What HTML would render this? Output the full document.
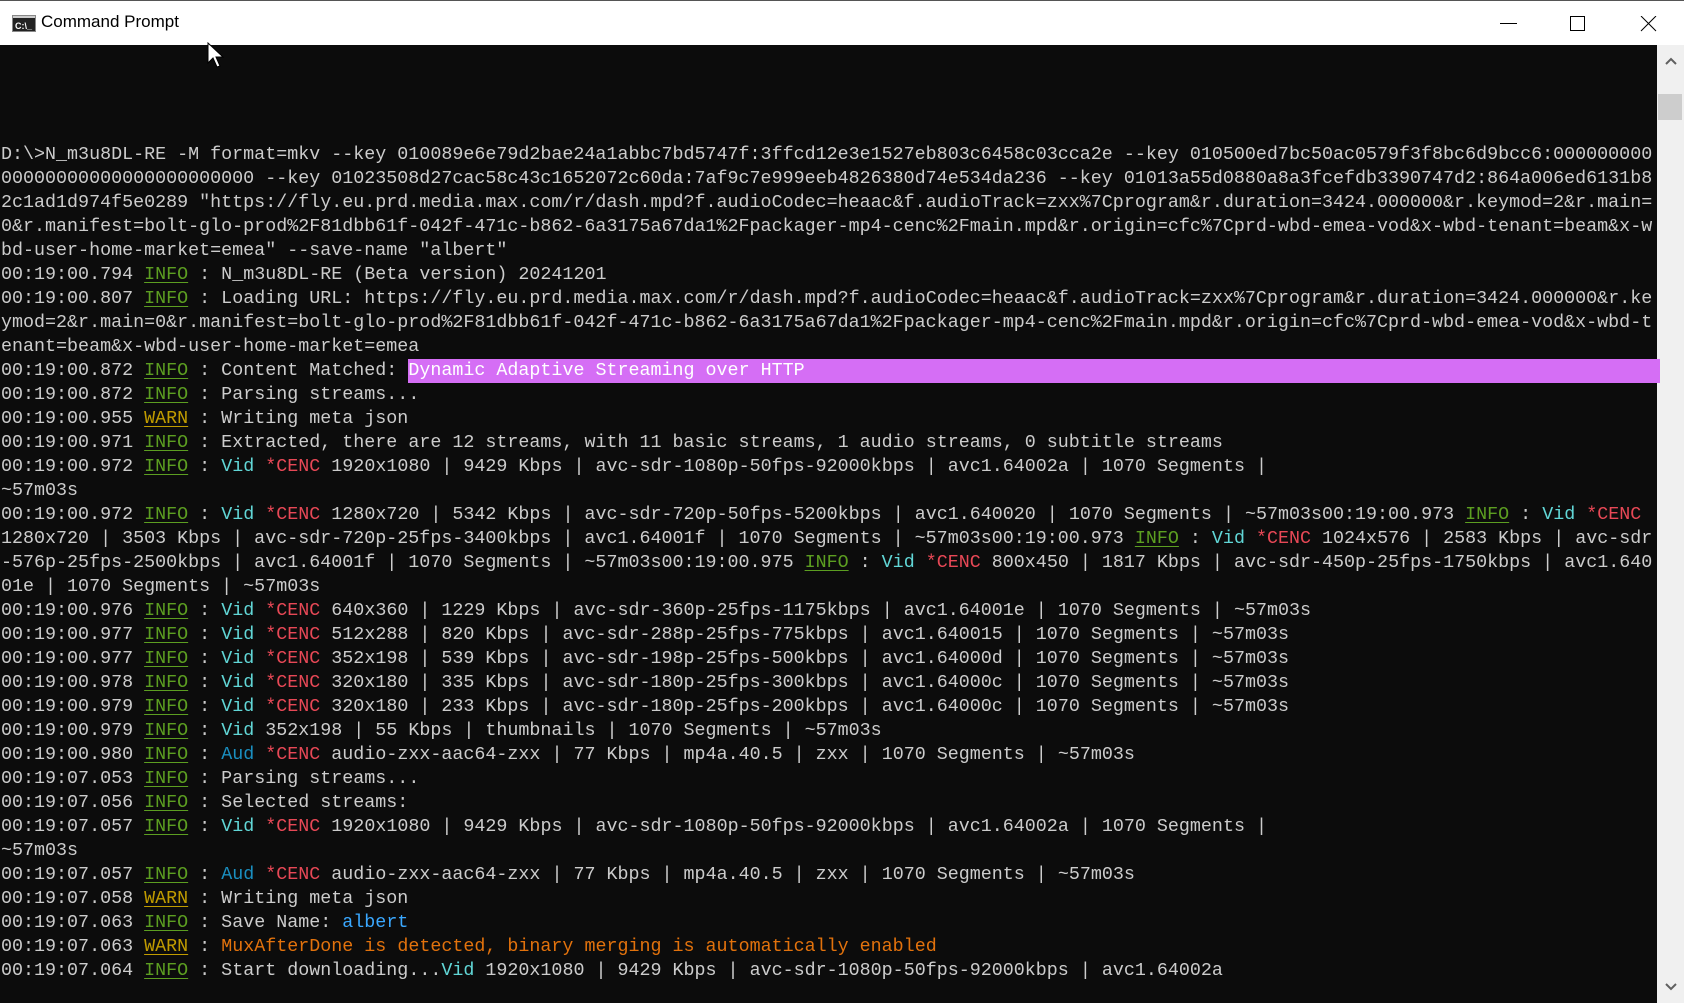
<!DOCTYPE html>
<html><head><meta charset="utf-8"><style>
html,body{margin:0;padding:0;width:1684px;height:1003px;overflow:hidden;background:#0c0c0c}
#title{position:absolute;left:0;top:0;width:1684px;height:45px;background:#fff;border-top:1px solid #555;box-sizing:border-box}
#title .t{position:absolute;left:41px;top:11px;font:17px "Liberation Sans",sans-serif;color:#000}
#scroll{position:absolute;left:1657px;top:45px;width:27px;height:958px;background:#f0f0f0}
#thumb{position:absolute;left:1658px;top:94px;width:24px;height:26px;background:#cdcdcd}
#con{position:absolute;left:1px;top:143px;font-family:"Liberation Mono",monospace;font-size:18.35px;line-height:24px;color:#cccccc;white-space:normal}
#con div{height:24px;white-space:pre}
.i{color:#5c9e21;text-decoration:underline;text-underline-offset:3px}
.w{color:#c19c00;text-decoration:underline;text-underline-offset:3px}
.v{color:#61d6d6}.a{color:#1a8fc0}.c{color:#e74856}.b{color:#3aa8ff}.o{color:#e2720c}
.h{background:#d56ef5;color:#fff;display:inline-block;width:1252px}
</style></head><body>
<div id="title">
<svg style="position:absolute;left:12px;top:14px" width="24" height="17" viewBox="0 0 24 17"><rect x="0.5" y="0.5" width="23" height="16" fill="#222" stroke="#888"/><rect x="1" y="1" width="22" height="2" fill="#ccc"/><text x="3" y="14" font-family="Liberation Sans" font-size="9" font-weight="bold" fill="#fff">C:\_</text></svg>
<div class="t">Command Prompt</div>
<svg style="position:absolute;left:1500px;top:15px" width="160" height="16"><line x1="0" y1="7.5" x2="17" y2="7.5" stroke="#000"/><rect x="70.5" y="0.5" width="14" height="14" fill="none" stroke="#000"/><path d="M141 0L156 15M156 0L141 15" stroke="#000"/></svg>
</div>
<svg style="position:absolute;left:207px;top:42px" width="20" height="28" viewBox="0 0 20 28"><path d="M1 1L1 21L6 16L10 25L13 24L9 15L16 15Z" fill="#fff" stroke="#000"/></svg>
<div id="scroll"><svg style="position:absolute;left:8px;top:12px" width="12" height="8"><path d="M1 7L6 2L11 7" stroke="#606060" stroke-width="2" fill="none"/></svg><svg style="position:absolute;left:8px;top:938px" width="12" height="8"><path d="M1 1L6 6L11 1" stroke="#606060" stroke-width="2" fill="none"/></svg></div>
<div id="thumb"></div>
<div id="con">
<div>D:\&gt;N_m3u8DL-RE -M format=mkv --key 010089e6e79d2bae24a1abbc7bd5747f:3ffcd12e3e1527eb803c6458c03cca2e --key 010500ed7bc50ac0579f3f8bc6d9bcc6:000000000</div>
<div>00000000000000000000000 --key 01023508d27cac58c43c1652072c60da:7af9c7e999eeb4826380d74e534da236 --key 01013a55d0880a8a3fcefdb3390747d2:864a006ed6131b8</div>
<div>2c1ad1d974f5e0289 "https://fly.eu.prd.media.max.com/r/dash.mpd?f.audioCodec=heaac&amp;f.audioTrack=zxx%7Cprogram&amp;r.duration=3424.000000&amp;r.keymod=2&amp;r.main=</div>
<div>0&amp;r.manifest=bolt-glo-prod%2F81dbb61f-042f-471c-b862-6a3175a67da1%2Fpackager-mp4-cenc%2Fmain.mpd&amp;r.origin=cfc%7Cprd-wbd-emea-vod&amp;x-wbd-tenant=beam&amp;x-w</div>
<div>bd-user-home-market=emea" --save-name "albert"</div>
<div>00:19:00.794 <span class="i">INFO</span> : N_m3u8DL-RE (Beta version) 20241201</div>
<div>00:19:00.807 <span class="i">INFO</span> : Loading URL: https://fly.eu.prd.media.max.com/r/dash.mpd?f.audioCodec=heaac&amp;f.audioTrack=zxx%7Cprogram&amp;r.duration=3424.000000&amp;r.ke</div>
<div>ymod=2&amp;r.main=0&amp;r.manifest=bolt-glo-prod%2F81dbb61f-042f-471c-b862-6a3175a67da1%2Fpackager-mp4-cenc%2Fmain.mpd&amp;r.origin=cfc%7Cprd-wbd-emea-vod&amp;x-wbd-t</div>
<div>enant=beam&amp;x-wbd-user-home-market=emea</div>
<div>00:19:00.872 <span class="i">INFO</span> : Content Matched: <span class="h">Dynamic Adaptive Streaming over HTTP</span></div>
<div>00:19:00.872 <span class="i">INFO</span> : Parsing streams...</div>
<div>00:19:00.955 <span class="w">WARN</span> : Writing meta json</div>
<div>00:19:00.971 <span class="i">INFO</span> : Extracted, there are 12 streams, with 11 basic streams, 1 audio streams, 0 subtitle streams</div>
<div>00:19:00.972 <span class="i">INFO</span> : <span class="v">Vid</span> <span class="c">*CENC</span> 1920x1080 | 9429 Kbps | avc-sdr-1080p-50fps-92000kbps | avc1.64002a | 1070 Segments |</div>
<div>~57m03s</div>
<div>00:19:00.972 <span class="i">INFO</span> : <span class="v">Vid</span> <span class="c">*CENC</span> 1280x720 | 5342 Kbps | avc-sdr-720p-50fps-5200kbps | avc1.640020 | 1070 Segments | ~57m03s00:19:00.973 <span class="i">INFO</span> : <span class="v">Vid</span> <span class="c">*CENC</span></div>
<div>1280x720 | 3503 Kbps | avc-sdr-720p-25fps-3400kbps | avc1.64001f | 1070 Segments | ~57m03s00:19:00.973 <span class="i">INFO</span> : <span class="v">Vid</span> <span class="c">*CENC</span> 1024x576 | 2583 Kbps | avc-sdr</div>
<div>-576p-25fps-2500kbps | avc1.64001f | 1070 Segments | ~57m03s00:19:00.975 <span class="i">INFO</span> : <span class="v">Vid</span> <span class="c">*CENC</span> 800x450 | 1817 Kbps | avc-sdr-450p-25fps-1750kbps | avc1.640</div>
<div>01e | 1070 Segments | ~57m03s</div>
<div>00:19:00.976 <span class="i">INFO</span> : <span class="v">Vid</span> <span class="c">*CENC</span> 640x360 | 1229 Kbps | avc-sdr-360p-25fps-1175kbps | avc1.64001e | 1070 Segments | ~57m03s</div>
<div>00:19:00.977 <span class="i">INFO</span> : <span class="v">Vid</span> <span class="c">*CENC</span> 512x288 | 820 Kbps | avc-sdr-288p-25fps-775kbps | avc1.640015 | 1070 Segments | ~57m03s</div>
<div>00:19:00.977 <span class="i">INFO</span> : <span class="v">Vid</span> <span class="c">*CENC</span> 352x198 | 539 Kbps | avc-sdr-198p-25fps-500kbps | avc1.64000d | 1070 Segments | ~57m03s</div>
<div>00:19:00.978 <span class="i">INFO</span> : <span class="v">Vid</span> <span class="c">*CENC</span> 320x180 | 335 Kbps | avc-sdr-180p-25fps-300kbps | avc1.64000c | 1070 Segments | ~57m03s</div>
<div>00:19:00.979 <span class="i">INFO</span> : <span class="v">Vid</span> <span class="c">*CENC</span> 320x180 | 233 Kbps | avc-sdr-180p-25fps-200kbps | avc1.64000c | 1070 Segments | ~57m03s</div>
<div>00:19:00.979 <span class="i">INFO</span> : <span class="v">Vid</span> 352x198 | 55 Kbps | thumbnails | 1070 Segments | ~57m03s</div>
<div>00:19:00.980 <span class="i">INFO</span> : <span class="a">Aud</span> <span class="c">*CENC</span> audio-zxx-aac64-zxx | 77 Kbps | mp4a.40.5 | zxx | 1070 Segments | ~57m03s</div>
<div>00:19:07.053 <span class="i">INFO</span> : Parsing streams...</div>
<div>00:19:07.056 <span class="i">INFO</span> : Selected streams:</div>
<div>00:19:07.057 <span class="i">INFO</span> : <span class="v">Vid</span> <span class="c">*CENC</span> 1920x1080 | 9429 Kbps | avc-sdr-1080p-50fps-92000kbps | avc1.64002a | 1070 Segments |</div>
<div>~57m03s</div>
<div>00:19:07.057 <span class="i">INFO</span> : <span class="a">Aud</span> <span class="c">*CENC</span> audio-zxx-aac64-zxx | 77 Kbps | mp4a.40.5 | zxx | 1070 Segments | ~57m03s</div>
<div>00:19:07.058 <span class="w">WARN</span> : Writing meta json</div>
<div>00:19:07.063 <span class="i">INFO</span> : Save Name: <span class="b">albert</span></div>
<div>00:19:07.063 <span class="w">WARN</span> : <span class="o">MuxAfterDone is detected, binary merging is automatically enabled</span></div>
<div>00:19:07.064 <span class="i">INFO</span> : Start downloading...<span class="v">Vid</span> 1920x1080 | 9429 Kbps | avc-sdr-1080p-50fps-92000kbps | avc1.64002a</div>
</div>
</body></html>
